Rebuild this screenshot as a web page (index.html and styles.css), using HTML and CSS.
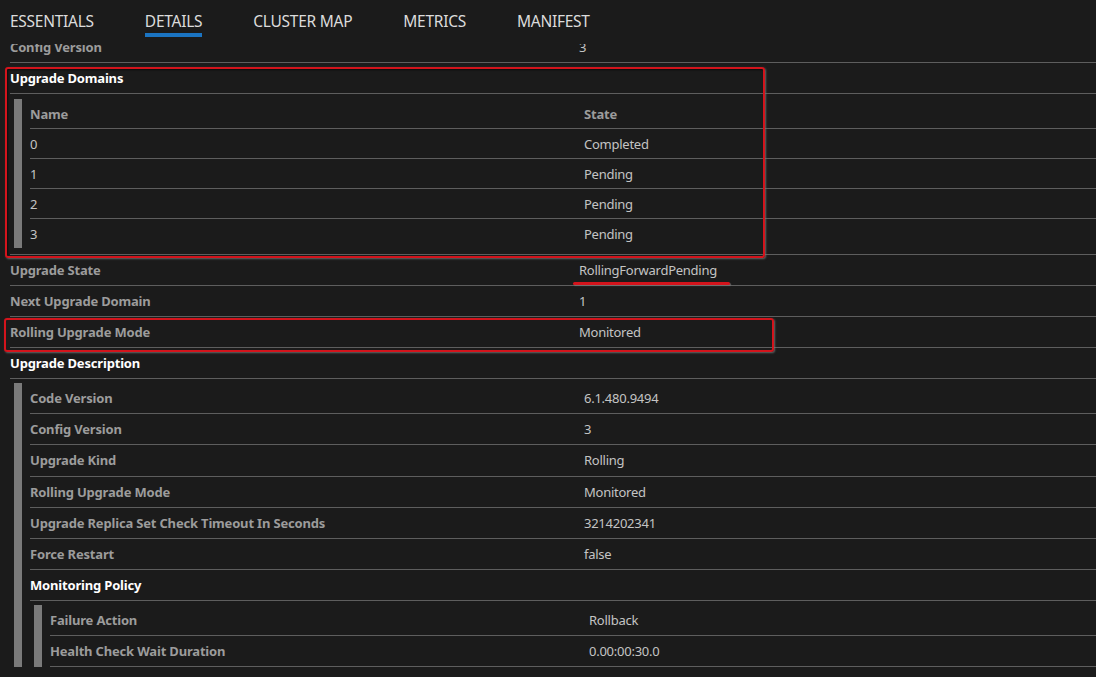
FILE: index.html
```html
<!DOCTYPE html>
<html lang="en">
<head>
<meta charset="utf-8">
<title>Details</title>
<link rel="stylesheet" href="styles.css">
</head>
<body>
<nav class="tabs">
  <span class="tab">ESSENTIALS</span>
  <span class="tab active">DETAILS</span>
  <span class="tab">CLUSTER MAP</span>
  <span class="tab">METRICS</span>
  <span class="tab">MANIFEST</span>
</nav>
<main class="viewport">
  <div class="list">
    <div class="row"><span class="k">Config Version</span><span class="v">3</span></div>

    <section class="group mark-box">
      <div class="row"><span class="h">Upgrade Domains</span></div>
      <div class="nested domains">
        <div class="bar"></div>
        <div class="nested-body">
          <div class="trow thead"><span class="k">Name</span><span class="k">State</span></div>
          <div class="trow"><span class="v">0</span><span class="v">Completed</span></div>
          <div class="trow"><span class="v">1</span><span class="v">Pending</span></div>
          <div class="trow"><span class="v">2</span><span class="v">Pending</span></div>
          <div class="trow last"><span class="v">3</span><span class="v">Pending</span></div>
        </div>
      </div>
    </section>

    <div class="row"><span class="k">Upgrade State</span><span class="v mark-underline">RollingForwardPending</span></div>
    <div class="row"><span class="k">Next Upgrade Domain</span><span class="v">1</span></div>
    <div class="row mark-row"><span class="k">Rolling Upgrade Mode</span><span class="v">Monitored</span></div>

    <section class="group">
      <div class="row"><span class="h">Upgrade Description</span></div>
      <div class="nested desc">
        <div class="bar"></div>
        <div class="nested-body">
          <div class="row"><span class="k">Code Version</span><span class="v">6.1.480.9494</span></div>
          <div class="row"><span class="k">Config Version</span><span class="v">3</span></div>
          <div class="row"><span class="k">Upgrade Kind</span><span class="v">Rolling</span></div>
          <div class="row"><span class="k">Rolling Upgrade Mode</span><span class="v">Monitored</span></div>
          <div class="row"><span class="k">Upgrade Replica Set Check Timeout In Seconds</span><span class="v">3214202341</span></div>
          <div class="row"><span class="k">Force Restart</span><span class="v">false</span></div>
          <div class="row"><span class="h">Monitoring Policy</span></div>
          <div class="nested policy">
            <div class="bar"></div>
            <div class="nested-body">
              <div class="row"><span class="k">Failure Action</span><span class="v">Rollback</span></div>
              <div class="row"><span class="k">Health Check Wait Duration</span><span class="v">0.00:00:30.0</span></div>
            </div>
          </div>
        </div>
      </div>
    </section>
  </div>
</main>
</body>
</html>
```
FILE: styles.css
```css
* { box-sizing: border-box; }

html, body {
  margin: 0;
  height: 100%;
  background: #1b1b1b;
}

body {
  font-family: "Noto Sans", "Open Sans", "DejaVu Sans", sans-serif;
  font-size: 13px;
  color: #c8c8c8;
  overflow: hidden;
}

.tabs {
  display: flex;
  gap: 51px;
  height: 44px;
  padding: 0 0 0 10px;
  align-items: flex-start;
}

.tab {
  font-size: 15.5px;
  color: #dcdcdc;
  line-height: 20px;
  padding-top: 11px;
  height: 37px;
  letter-spacing: -0.26px;
  border-bottom: 4px solid transparent;
}

.tab.active {
  border-bottom-color: #1b74c2;
}

.viewport {
  height: calc(100% - 44px);
  overflow: hidden;
}

.list {
  margin-top: -12px;
  padding-left: 10px;
  position: relative;
}

.row {
  display: flex;
  align-items: center;
  height: 31px;
  border-bottom: 1px solid #5e5e5e;
}

.k, .h {
  font-weight: 700;
  color: #9c9c9c;
  white-space: nowrap;
  letter-spacing: -0.18px;
}

.h { color: #ffffff; }

.list > .row .k,
.list > .group > .row .h { width: 569px; }

.v {
  color: #c4c4c4;
  letter-spacing: -0.25px;
}

.group { position: relative; }

.nested {
  display: flex;
  gap: 8px;
}

.bar {
  width: 8px;
  flex: none;
  background: #7a7a7a;
}

.nested-body { flex: 1; }

.domains {
  padding: 5px 0 6px 4px;
  border-bottom: 1px solid #5e5e5e;
}

.trow {
  display: flex;
  align-items: center;
  height: 30px;
  border-bottom: 1px solid #5e5e5e;
}

.trow.last { border-bottom: none; height: 29px; }

.trow > span:first-child { width: 554px; }

.desc {
  padding: 4px 0 0 4px;
}

.desc > .nested-body > .row { height: 31.2px; }

.desc > .nested-body > .row .k,
.desc > .nested-body > .row .h { width: 554px; }

.policy {
  padding: 4px 0 0 4px;
}

.policy .row .k { width: 539px; }

/* red annotation marks drawn over the content */
.mark-box::after {
  content: "";
  position: absolute;
  left: -5px;
  top: 4px;
  width: 756px;
  height: 187px;
  border: 2px solid #d3141c;
  border-radius: 3px;
  box-shadow: 1px 1px 2px rgba(120, 120, 120, 0.8), inset 1px 1px 2px rgba(0, 0, 0, 0.6);
  pointer-events: none;
}

.mark-row { position: relative; }

.mark-row::after {
  content: "";
  position: absolute;
  left: -6px;
  top: 1px;
  width: 766px;
  height: 30px;
  border: 2px solid #d3141c;
  border-radius: 3px;
  box-shadow: 1px 1px 2px rgba(120, 120, 120, 0.8);
  pointer-events: none;
}

.mark-underline { position: relative; }

.mark-underline::after {
  content: "";
  position: absolute;
  left: -6px;
  right: -13px;
  bottom: -6px;
  height: 3px;
  background: #d3141c;
  border-radius: 2px;
  box-shadow: 1px 1px 1px rgba(120, 120, 120, 0.8);
}
```
